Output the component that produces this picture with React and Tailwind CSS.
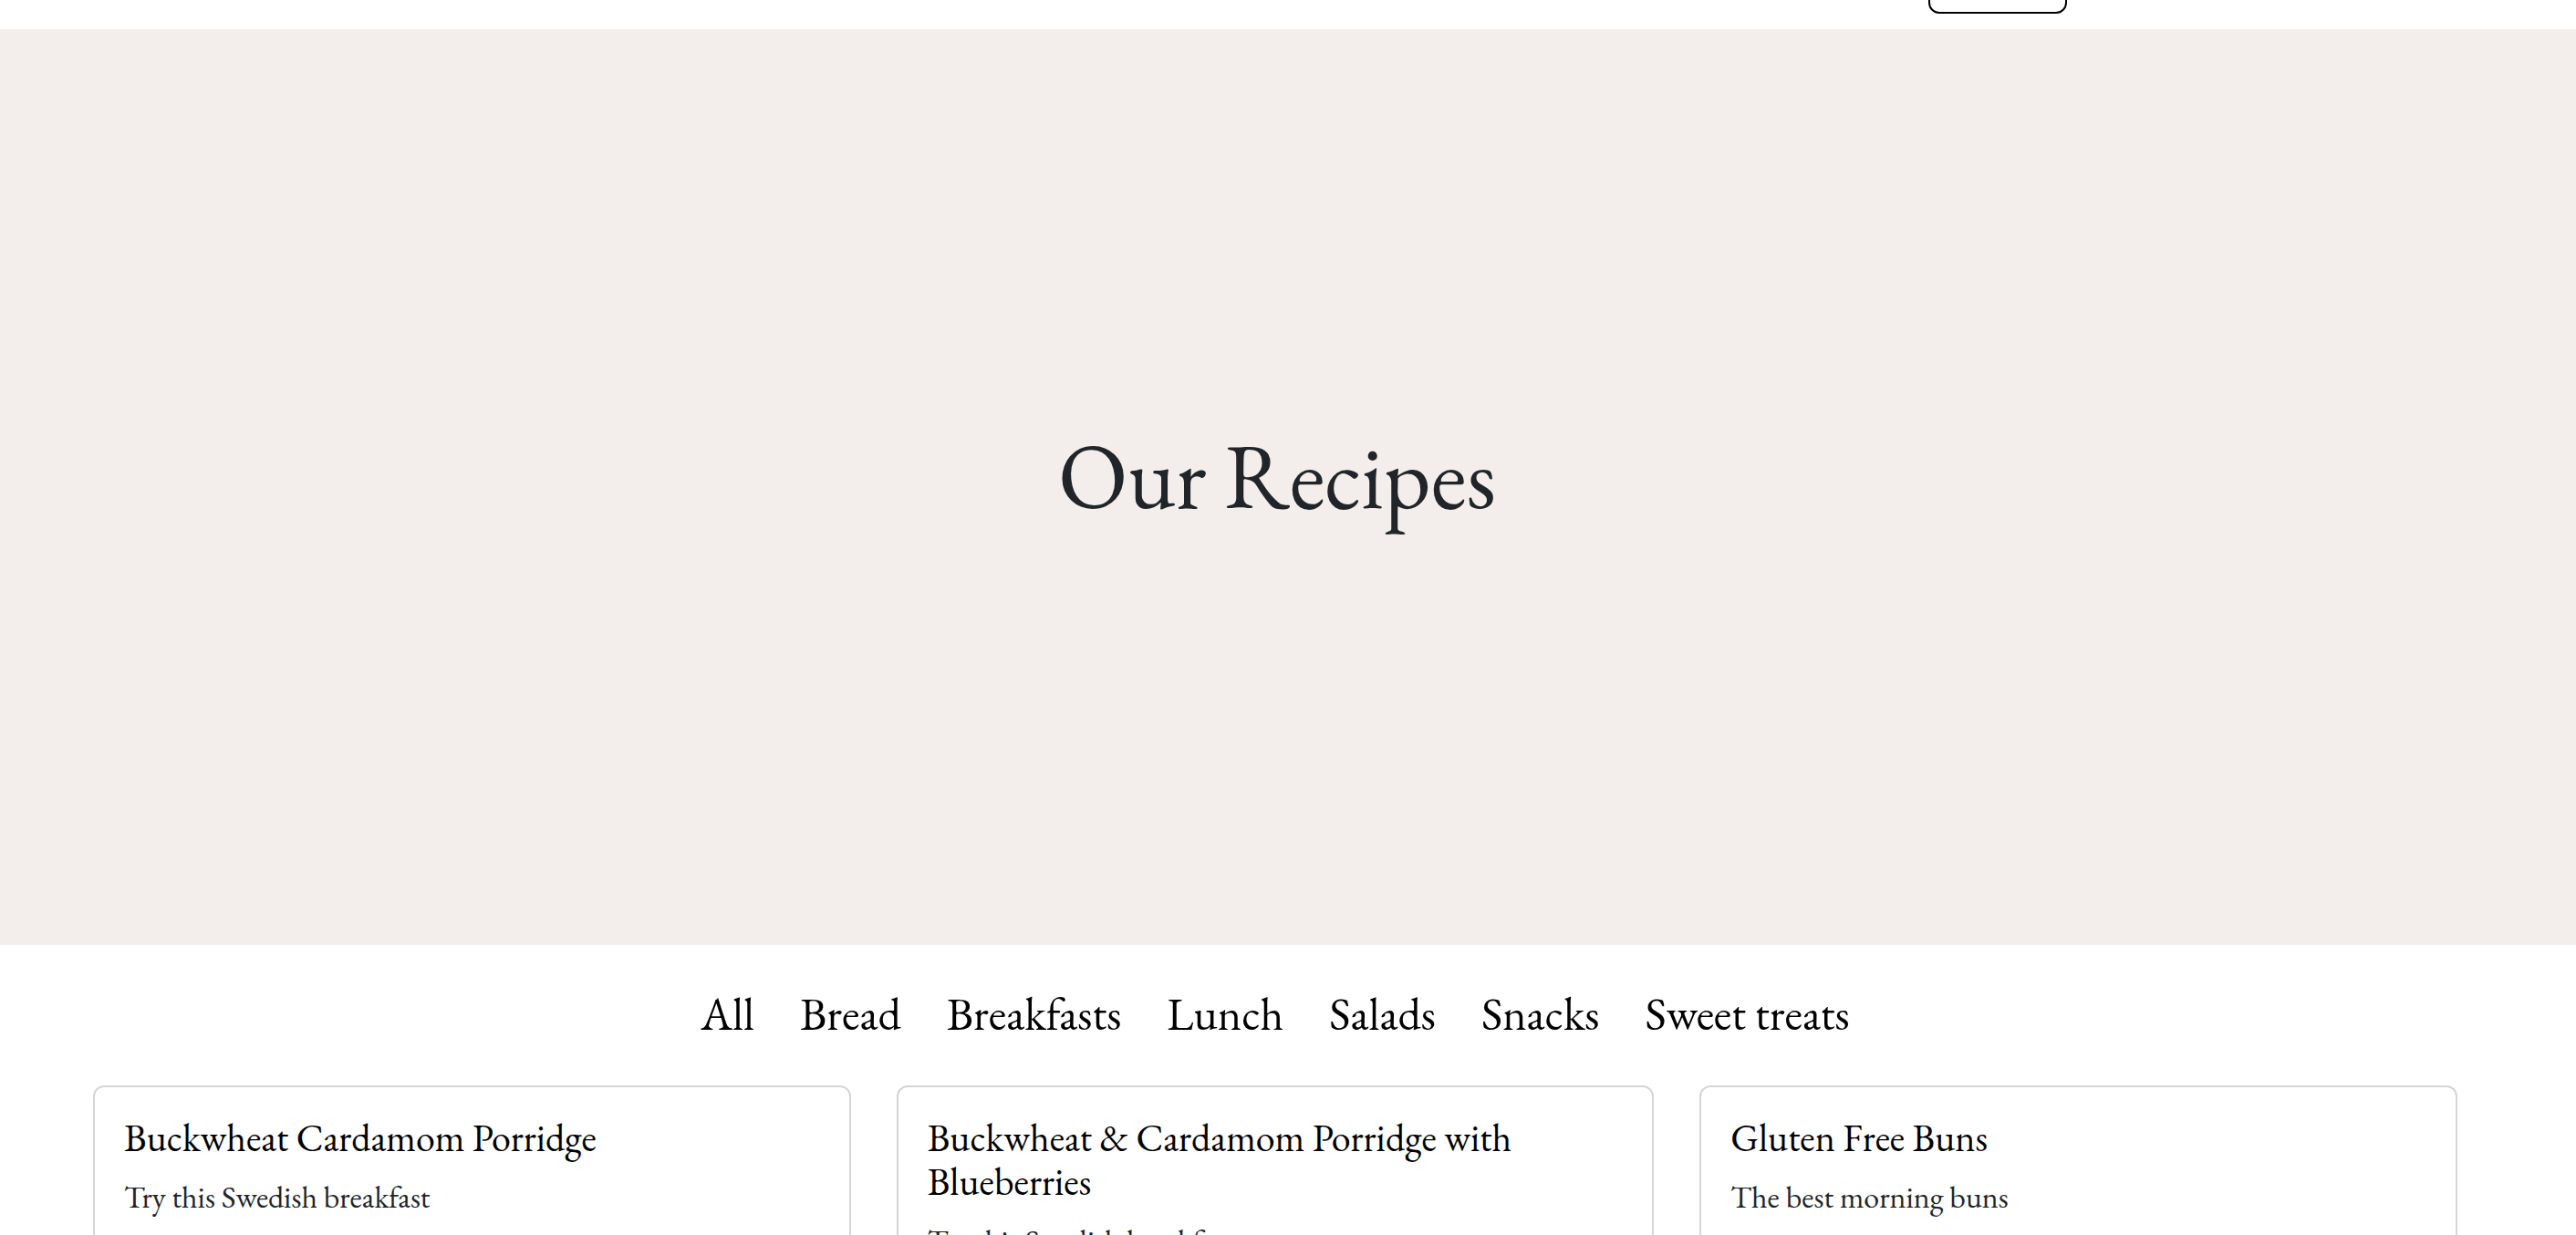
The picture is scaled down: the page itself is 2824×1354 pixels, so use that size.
export default function App() {
  const filters = ["All", "Bread", "Breakfasts", "Lunch", "Salads", "Snacks", "Sweet treats"];
  const cards = [
    { title: "Buckwheat Cardamom Porridge", sub: "Try this Swedish breakfast" },
    { title: "Buckwheat & Cardamom Porridge with Blueberries", sub: "Try this Swedish breakfast" },
    { title: "Gluten Free Buns", sub: "The best morning buns" },
  ];
  return (
    <div className="w-full h-[1354px] overflow-hidden bg-white font-['EB_Garamond','Liberation_Serif',serif]">
      <header className="h-[32px] bg-white flex justify-end pr-[558px]">
        <button className="w-[152px] h-[44px] -mt-[29px] border-2 border-black rounded-[12px] bg-white"></button>
      </header>
      <section className="h-[1004px] bg-[#f3eeeb] flex items-center justify-center pr-[24px] pb-[26px]">
        <h1 className="text-[100px] leading-[115px] text-[#212529] font-normal">Our Recipes</h1>
      </section>
      <div className="pr-[28px]">
        <nav className="mt-[41px] flex justify-center gap-[50px] text-[50px] leading-[69px] text-black">
          {filters.map((f) => (
            <span key={f}>{f}</span>
          ))}
        </nav>
        <div className="mt-[44px] mx-auto w-[2592px] grid grid-cols-3 gap-x-[50px]">
          {cards.map((c) => (
            <div key={c.title} className="border-2 border-[#d6d6d6] rounded-[12px] p-8 h-[400px]">
              <h5 className="text-[42px] leading-[48px] text-black mb-4">{c.title}</h5>
              <p className="text-[34px] leading-[48px] text-[#212529]">{c.sub}</p>
            </div>
          ))}
        </div>
      </div>
    </div>
  );
}
